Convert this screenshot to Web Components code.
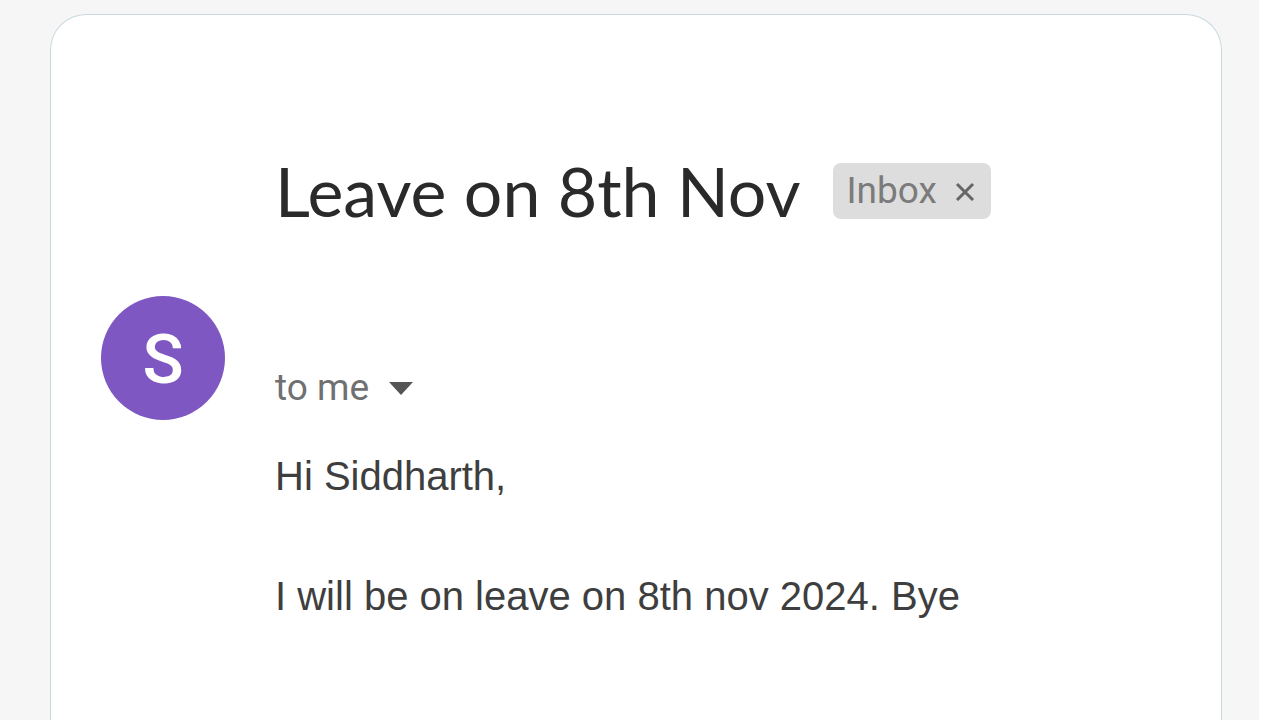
<!DOCTYPE html>
<html lang="en">
<head>
<meta charset="UTF-8">
<meta name="viewport" content="width=device-width, initial-scale=1">
<title>Leave on 8th Nov</title>
<style>
  body {
    margin: 0;
    background: #ffffff;
    font-family: "Liberation Sans", Arial, sans-serif;
    color: #3e3e3e;
  }
</style>
</head>
<body>
<mail-page>
  <mail-card>
    <mail-subject slot="subject" label="Inbox">Leave on 8th Nov</mail-subject>
    <sender-avatar slot="avatar">S</sender-avatar>
    <mail-recipient slot="recipient">to me</mail-recipient>
    <mail-body>
      <p>Hi Siddharth,</p>
      <p>I will be on leave on 8th nov 2024. Bye</p>
    </mail-body>
  </mail-card>
</mail-page>

<script>
class MailPage extends HTMLElement {
  constructor() {
    super();
    this.attachShadow({ mode: "open" }).innerHTML = `
      <style>
      :host {
        display: flex;
        flex-direction: column;
        box-sizing: border-box;
        min-height: 100vh;
        margin-right: 21px;
        padding: 14px 37px 0 50px;
        background: #f6f6f6;
      }
      </style>
      <slot></slot>
    `;
  }
}

class MailCard extends HTMLElement {
  constructor() {
    super();
    this.attachShadow({ mode: "open" }).innerHTML = `
      <style>
      :host {
        display: grid;
        flex: 1;
        grid-template-columns: 124px 1fr;
        grid-template-rows: auto auto 1fr;
        column-gap: 50px;
        box-sizing: border-box;
        padding: 136px 50px 0;
        border: 1px solid #c9d8df;
        border-bottom: 0;
        border-radius: 36px 36px 0 0;
        background: #ffffff;
      }

      header {
        grid-column: 2;
      }

      .avatar {
        grid-column: 1;
        margin-top: 65px;
      }

      .recipient {
        align-self: end;
      }

      .message {
        grid-column: 2;
        margin-top: 26px;
      }
      </style>
      <header><slot name="subject"></slot></header>
      <div class="avatar"><slot name="avatar"></slot></div>
      <div class="recipient"><slot name="recipient"></slot></div>
      <div class="message"><slot></slot></div>
    `;
  }
}

class MailSubject extends HTMLElement {
  constructor() {
    super();
    this.attachShadow({ mode: "open" }).innerHTML = `
      <style>
      :host {
        display: flex;
        align-items: center;
        gap: 32px;
      }

      h1 {
        margin: 0;
        font: 400 68px/80px Lato, sans-serif;
        color: #2a2a2a;
      }

      .label {
        display: flex;
        align-items: center;
        gap: 18px;
        height: 56px;
        padding: 0 16px 0 14px;
        border-radius: 8px;
        background: #dddddd;
        font: 400 37px/56px Roboto, sans-serif;
        color: #7b7b7b;
      }

      button {
        display: flex;
        padding: 0;
        border: 0;
        background: none;
        color: #666666;
        cursor: pointer;
      }
      </style>
      <h1><slot></slot></h1>
      <div class="label">
        <span>${this.getAttribute("label")}</span>
        <button type="button" aria-label="Remove label">
          <svg width="20" height="20" viewBox="0 0 20 20" fill="none" stroke="currentColor" stroke-width="3">
            <path d="M2 3L18 19M18 3L2 19"/>
          </svg>
        </button>
      </div>
    `;
  }
}

class SenderAvatar extends HTMLElement {
  constructor() {
    super();
    this.attachShadow({ mode: "open" }).innerHTML = `
      <style>
      :host {
        display: block;
        width: 124px;
        height: 124px;
        border-radius: 50%;
        background: #7e57c2;
        font: 500 68px/128px Roboto, sans-serif;
        text-align: center;
        color: #ffffff;
      }
      </style>
      <slot></slot>
    `;
  }
}

class MailRecipient extends HTMLElement {
  constructor() {
    super();
    this.attachShadow({ mode: "open" }).innerHTML = `
      <style>
      :host {
        display: flex;
      }

      button {
        display: flex;
        align-items: center;
        gap: 20px;
        padding: 0;
        border: 0;
        background: none;
        font: 400 37px/64px Roboto, sans-serif;
        color: #707070;
        cursor: pointer;
      }
      </style>
      <button type="button" aria-haspopup="true">
        <slot></slot>
        <svg width="24" height="14" viewBox="0 0 24 14" fill="#555555">
          <path d="M0 1H24L12 14Z"/>
        </svg>
      </button>
    `;
  }
}

class MailBody extends HTMLElement {
  constructor() {
    super();
    this.attachShadow({ mode: "open" }).innerHTML = `
      <style>
      :host {
        display: flex;
        flex-direction: column;
        gap: 60px;
        font-size: 40px;
        line-height: 60px;
      }

      ::slotted(p) {
        margin: 0;
      }
      </style>
      <slot></slot>
    `;
  }
}

customElements.define("mail-page", MailPage);
customElements.define("mail-card", MailCard);
customElements.define("mail-subject", MailSubject);
customElements.define("sender-avatar", SenderAvatar);
customElements.define("mail-recipient", MailRecipient);
customElements.define("mail-body", MailBody);
</script>
</body>
</html>
